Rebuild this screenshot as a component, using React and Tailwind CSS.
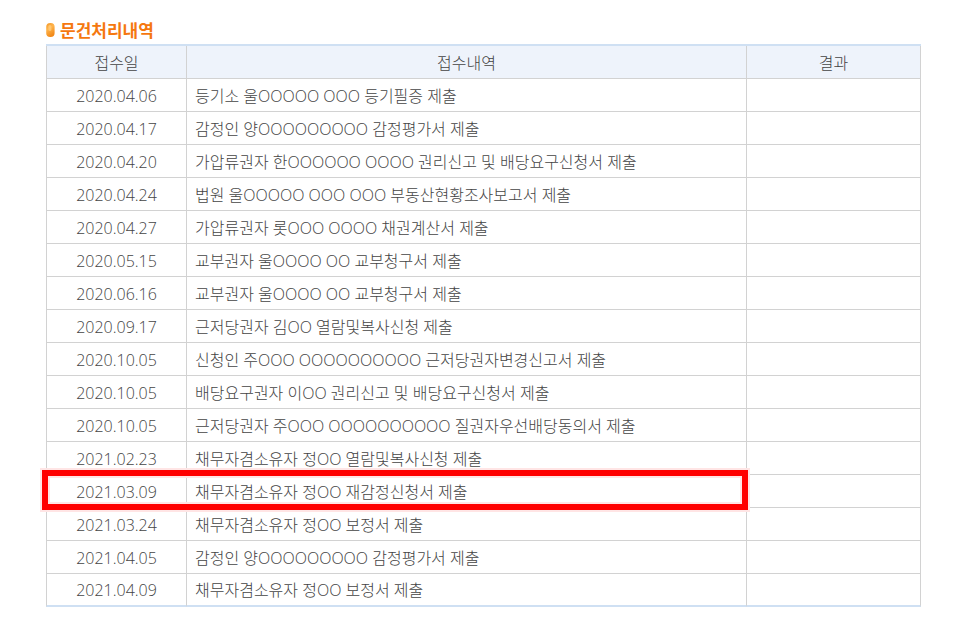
import React from 'react';

const documents = [
  { date: '2020.04.06', detail: '등기소 울OOOOO OOO 등기필증 제출' },
  { date: '2020.04.17', detail: '감정인 양OOOOOOOOO 감정평가서 제출' },
  { date: '2020.04.20', detail: '가압류권자 한OOOOOO OOOO 권리신고 및 배당요구신청서 제출' },
  { date: '2020.04.24', detail: '법원 울OOOOO OOO OOO 부동산현황조사보고서 제출' },
  { date: '2020.04.27', detail: '가압류권자 롯OOO OOOO 채권계산서 제출' },
  { date: '2020.05.15', detail: '교부권자 울OOOO OO 교부청구서 제출' },
  { date: '2020.06.16', detail: '교부권자 울OOOO OO 교부청구서 제출' },
  { date: '2020.09.17', detail: '근저당권자 김OO 열람및복사신청 제출' },
  { date: '2020.10.05', detail: '신청인 주OOO OOOOOOOOOO 근저당권자변경신고서 제출' },
  { date: '2020.10.05', detail: '배당요구권자 이OO 권리신고 및 배당요구신청서 제출' },
  { date: '2020.10.05', detail: '근저당권자 주OOO OOOOOOOOOO 질권자우선배당동의서 제출' },
  { date: '2021.02.23', detail: '채무자겸소유자 정OO 열람및복사신청 제출' },
  { date: '2021.03.09', detail: '채무자겸소유자 정OO 재감정신청서 제출', highlighted: true },
  { date: '2021.03.24', detail: '채무자겸소유자 정OO 보정서 제출' },
  { date: '2021.04.05', detail: '감정인 양OOOOOOOOO 감정평가서 제출' },
  { date: '2021.04.09', detail: '채무자겸소유자 정OO 보정서 제출' },
];

const BulletIcon = () => (
  <svg width="9" height="16" viewBox="0 0 9 16" aria-hidden="true">
    <defs>
      <linearGradient id="bullet" x1="0" y1="0" x2="0.4" y2="1">
        <stop offset="0" stopColor="#f39a2c" />
        <stop offset="0.45" stopColor="#ffb44c" />
        <stop offset="1" stopColor="#f28a1a" />
      </linearGradient>
    </defs>
    <rect x="0.2" y="1" width="8.4" height="14" rx="4" fill="url(#bullet)" />
    <rect x="2.4" y="3" width="3" height="6" rx="1.5" fill="#ffd68f" opacity="0.6" />
  </svg>
);

const App = () => {
  return (
    <main className="pt-4 pr-8 pl-[46px] font-['Open_Sans','Noto_Sans_CJK_KR',sans-serif] text-[#444]">
      <h1 className="flex h-7 items-center gap-[5px] font-['Noto_Sans_CJK_KR',sans-serif] text-[17px] leading-7 font-bold text-[#f5780f]">
        <BulletIcon />
        문건처리내역
      </h1>
      <table className="w-full table-fixed border-separate border-spacing-0 border-t-2 border-[#cfe0f3] text-base leading-[30px] font-light">
        <colgroup>
          <col className="w-[16%]" />
          <col className="w-[64%]" />
          <col className="w-[20%]" />
        </colgroup>
        <thead>
          <tr className="bg-[#eef3fb]">
            {['접수일', '접수내역', '결과'].map((label) => (
              <th key={label} scope="col" className="border-b border-l border-[#d2d2d2] px-0 pt-0.5 pb-0 font-light last:border-r">
                {label}
              </th>
            ))}
          </tr>
        </thead>
        <tbody className="[&>tr:last-child>td]:border-b-2 [&>tr:last-child>td]:border-b-[#cfe0f3] [&>tr:last-child>td]:leading-[29px]">
          {documents.map((doc, index) => (
            <tr key={index} className={doc.highlighted ? 'relative' : undefined}>
              <td className="border-b border-l border-[#d2d2d2] px-0 pt-0.5 pb-0 text-center">
                {doc.date}
                {doc.highlighted && (
                  <span className="pointer-events-none absolute -top-[5px] right-[calc(20%-2px)] -bottom-[2px] -left-1 border-6 border-[#ff0000] shadow-[0_0_0_2px_#ffe5e5,inset_0_0_0_2px_#ffe5e5]" />
                )}
              </td>
              <td className="border-b border-l border-[#d2d2d2] px-2 pt-0.5 pb-0">{doc.detail}</td>
              <td className="border-x border-b border-[#d2d2d2] px-0 pt-0.5 pb-0"></td>
            </tr>
          ))}
        </tbody>
      </table>
    </main>
  );
};

export default App;
